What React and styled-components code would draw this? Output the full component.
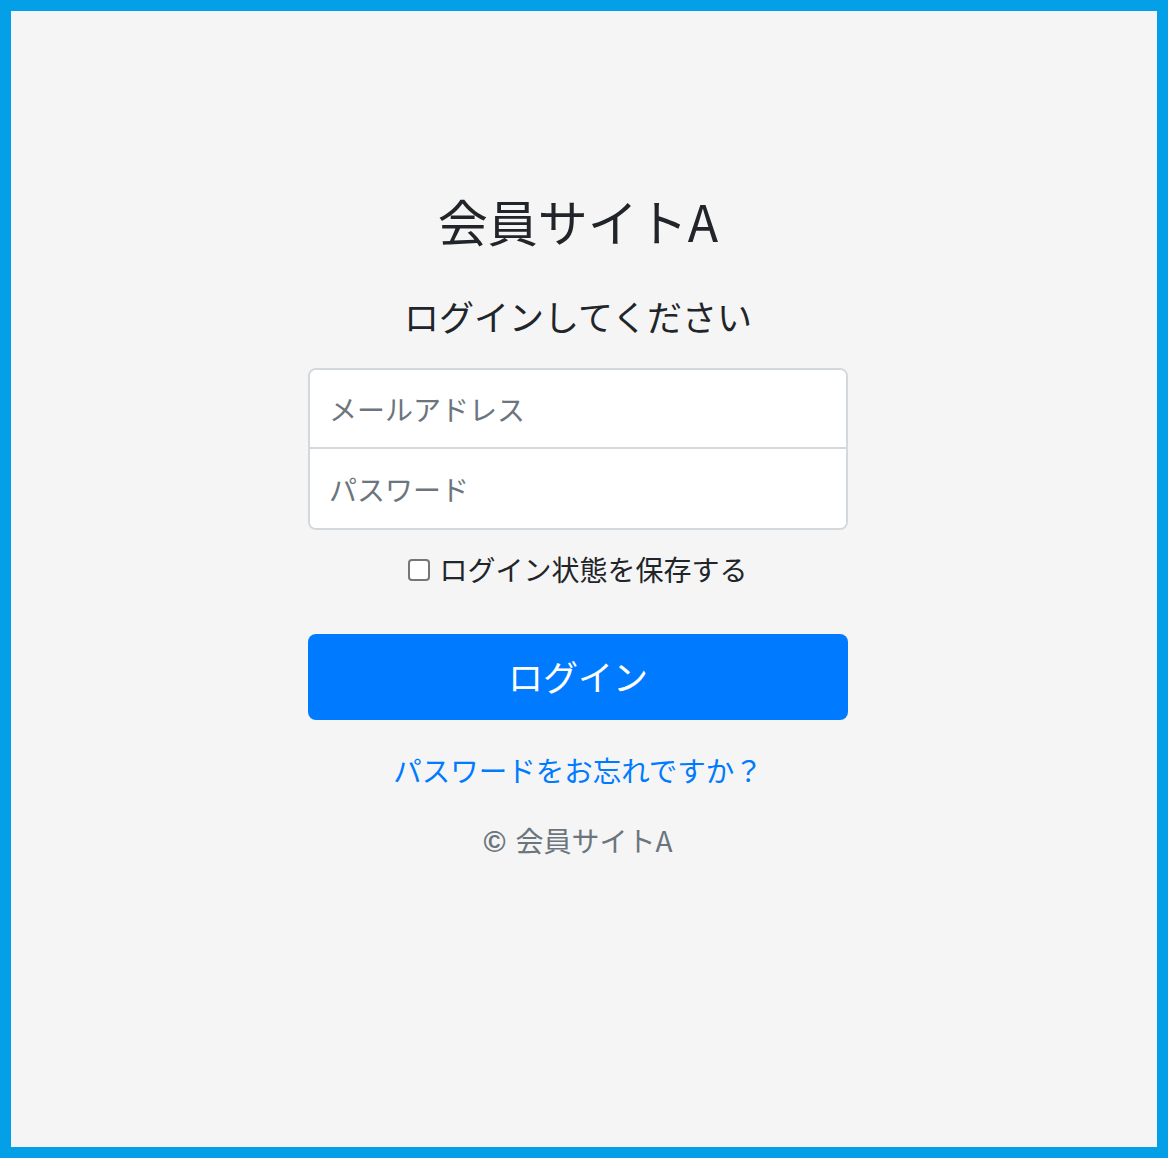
import React from "react";
import styled, { createGlobalStyle } from "styled-components";

const Global = createGlobalStyle`
  html, body { margin: 0; padding: 0; }
  body {
    font-family: "Noto Sans CJK JP", "Noto Sans", sans-serif;
    color: #212529;
    background: #03a0e8;
  }
  * { box-sizing: border-box; }
`;

const Frame = styled.div`
  min-height: 1158px;
  border: 11px solid #03a0e8;
  background: #f5f5f5;
  padding: 179px 12px 0 0;
`;

const Form = styled.form`
  width: 540px;
  margin: 0 auto;
  display: flex;
  flex-direction: column;
  align-items: stretch;
  text-align: center;
`;

const Title = styled.h1`
  margin: 0;
  font-size: 50px;
  font-weight: 400;
  line-height: 60px;
  color: #212529;
`;

const Subtitle = styled.h2`
  margin: 45px 0 0;
  font-size: 35px;
  font-weight: 400;
  line-height: 42px;
  color: #212529;
`;

const InputGroup = styled.div`
  margin-top: 31px;
  border: 2px solid #d3d8dd;
  border-radius: 8px;
  background: #fff;
  overflow: hidden;
`;

const Input = styled.input`
  display: block;
  width: 100%;
  height: ${(p) => p.$h}px;
  border: 0;
  border-bottom: ${(p) => (p.$divider ? "2px solid #d3d8dd" : "0")};
  padding: 0 19px;
  font-family: inherit;
  font-size: 28px;
  color: #495057;
  background: #fff;
  outline: none;
  &::placeholder { color: #6c757d; }
`;

const CheckRow = styled.label`
  margin-top: 18px;
  display: flex;
  align-items: center;
  justify-content: center;
  gap: 9px;
  font-size: 28px;
  line-height: 42px;
  color: #212529;
`;

const Check = styled.input`
  appearance: none;
  margin: 0;
  width: 22px;
  height: 22px;
  border: 2px solid #767676;
  border-radius: 4px;
  background: #fff;
  transform: translateY(1px);
`;

const Button = styled.button`
  margin-top: 44px;
  height: 86px;
  border: 0;
  border-radius: 8px;
  background: #007bff;
  color: #fff;
  font-family: inherit;
  font-size: 35px;
  line-height: 1;
  padding: 0 0 4px;
  cursor: pointer;
`;

const Link = styled.a`
  margin-top: 29px;
  font-size: 28.5px;
  line-height: 42px;
  color: #007bff;
  text-decoration: none;
`;

const Footer = styled.p`
  margin: 28px 0 0;
  font-size: 28px;
  line-height: 42px;
  color: #6c757d;
`;

const Copy = styled.span`
  font-family: "Liberation Sans", sans-serif;
  font-weight: 700;
  font-size: 30px;
  margin-right: 10px;
`;

export default function App() {
  return (
    <>
      <Global />
      <Frame>
        <Form onSubmit={(e) => e.preventDefault()}>
          <Title>会員サイトA</Title>
          <Subtitle>ログインしてください</Subtitle>
          <InputGroup>
            <Input type="email" placeholder="メールアドレス" $h={79} $divider />
            <Input type="password" placeholder="パスワード" $h={79} />
          </InputGroup>
          <CheckRow>
            <Check type="checkbox" />
            ログイン状態を保存する
          </CheckRow>
          <Button type="submit">ログイン</Button>
          <Link href="#">パスワードをお忘れですか？</Link>
          <Footer>
            <Copy>©</Copy>会員サイトA
          </Footer>
        </Form>
      </Frame>
    </>
  );
}
